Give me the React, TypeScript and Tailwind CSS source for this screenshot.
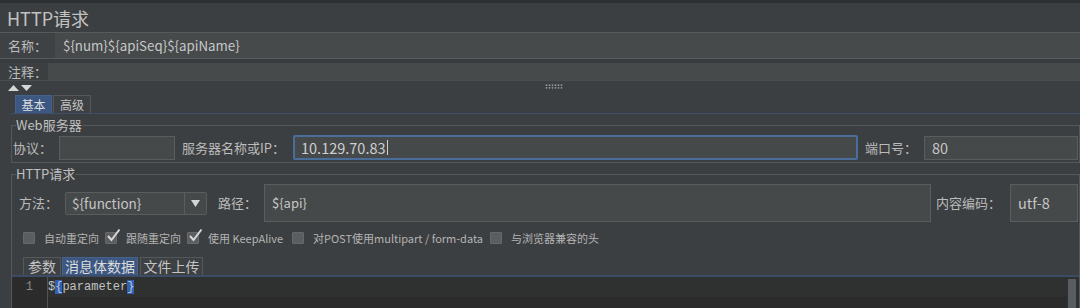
import React from "react";

const cjk = "font-['Noto_Sans_CJK_SC',sans-serif]";

function Field({ className = "", children }: { className?: string; children?: React.ReactNode }) {
  return (
    <div
      className={`flex items-center bg-[#45494a] border border-[#5a5d5f] px-[7px] text-[13px] text-[#c6c6c6] ${className}`}
    >
      {children}
    </div>
  );
}

function Check({ checked, label, className = "" }: { checked?: boolean; label: string; className?: string }) {
  return (
    <div className={`flex items-center ${className}`}>
      <span className="relative shrink-0 w-[12px] h-[12px] bg-[#5b5e60] border border-[#66696b] rounded-[1px]">
        {checked && (
          <svg className="absolute -top-[5px] left-[0px]" width="15" height="15" viewBox="0 0 15 15">
            <path d="M2 8 L5.5 12 L13.5 1.5" fill="none" stroke="#d8d8d8" strokeWidth="2" />
          </svg>
        )}
      </span>
      <span className="ml-[9px] text-[11px] text-[#b4b4b4] whitespace-nowrap">{label}</span>
    </div>
  );
}

function Tab({ label, active, className = "" }: { label: string; active?: boolean; className?: string }) {
  return (
    <div
      className={`flex items-center justify-center h-full border border-b-0 ${
        active ? "bg-[#3b5782] border-[#45618c] text-[#dcdcdc]" : "bg-[#3e4143] border-[#55585a] text-[#c4c4c4]"
      } ${className}`}
    >
      {label}
    </div>
  );
}

export default function App() {
  return (
    <div
      className={`w-[1080px] h-[308px] overflow-hidden bg-[#3c3f41] text-[#bbbbbb] border-t-[3px] border-[#2d2f31] ${cjk}`}
    >
      {/* title */}
      <div className="h-[29px] pl-[7px] flex items-center text-[18px] text-[#c2c2c2] leading-none">HTTP请求</div>

      {/* name */}
      <div className="flex h-[27px] border-y border-[#57595b] bg-[#3f4244]">
        <div className="w-[55px] pl-[8px] flex items-center text-[13px]">名称：</div>
        <div className="flex-1 flex items-center bg-[#464a4b] pl-[8px] text-[13.3px] text-[#c8c8c8]">
          {"${num}${apiSeq}${apiName}"}
        </div>
      </div>
      <div className="h-[4px] bg-[#393c3e]" />

      {/* comment */}
      <div className="flex h-[18px] border-b border-[#4a4d4f]">
        <div className="w-[48px] pl-[8px] flex items-center text-[13px]">注释：</div>
        <div className="flex-1 bg-[#464a4b]" />
      </div>

      {/* arrows + splitter handle */}
      <div className="relative h-[14px] flex items-center pl-[8px]">
        <svg width="26" height="8" viewBox="0 0 26 8">
          <path d="M0 7 L5.5 1 L11 7 Z" fill="#d6d6d6" />
          <path d="M13 1 L24 1 L18.5 7 Z" fill="#d6d6d6" />
        </svg>
        <svg className="absolute left-[545px] top-[3px]" width="18" height="5" viewBox="0 0 18 5">
          {[0, 1, 2, 3, 4, 5].map((i) => (
            <g key={i}>
              <circle cx={1.5 + i * 3} cy={1.2} r={0.9} fill="#9a9a9a" />
              <circle cx={1.5 + i * 3} cy={3.8} r={0.9} fill="#9a9a9a" />
            </g>
          ))}
        </svg>
      </div>

      {/* top tabs */}
      <div className="ml-[11px] h-[19px] pl-[4px] flex items-end border-b border-[#3e4f6b] text-[12px]">
        <Tab label="基本" active className="w-[37px] h-[18px]" />
        <Tab label="高级" className="w-[38px] h-[18px] ml-[1px]" />
      </div>

      {/* Web server group */}
      <fieldset className="ml-[11px] mt-[4px] border border-[#55585a] px-0 pb-[2px]">
        <legend className="ml-[4px] text-[13px] leading-[14px] text-[#c0c0c0]">Web服务器</legend>
        <div className="mt-[3px] flex h-[25px] items-center text-[13px]">
          <div className="w-[47px] pl-[1px]">协议：</div>
          <Field className="w-[116px] h-[24px]" />
          <div className="w-[118px] pl-[7px] whitespace-nowrap">服务器名称或IP：</div>
          <div className="flex-1 h-[25px] border-2 border-[#4a6d9a] rounded-[2px] bg-[#45494a] flex items-center pl-[6px] text-[14.5px] text-[#cfcfcf]">
            10.129.70.83
            <span className="ml-[1px] w-px h-[15px] bg-[#d0d0d0]" />
          </div>
          <div className="w-[66px] pl-[7px] whitespace-nowrap">端口号：</div>
          <Field className="w-[154px] h-[24px] mr-[1px] text-[14.5px]">80</Field>
        </div>
      </fieldset>

      {/* HTTP request group */}
      <fieldset className="ml-[11px] mt-[4px] border border-[#55585a] px-0">
        <legend className="ml-[4px] text-[13px] leading-[14px] text-[#c0c0c0]">HTTP请求</legend>
        <div className="mt-[3px] flex h-[38px] items-center text-[13px]">
          <div className="w-[53px] pl-[7px]">方法：</div>
          <div className="w-[142px] h-[23px] flex bg-[#45494a] border border-[#5a5d5f] rounded-[2px] text-[13.5px] text-[#c6c6c6]">
            <div className="flex-1 flex items-center pl-[6px]">{"${function}"}</div>
            <div className="w-[22px] border-l border-[#5a5d5f] flex items-center justify-center">
              <svg width="9" height="7" viewBox="0 0 9 7">
                <path d="M0 0 L9 0 L4.5 7 Z" fill="#d4d4d4" />
              </svg>
            </div>
          </div>
          <div className="w-[57px] pl-[11px]">路径：</div>
          <Field className="flex-1 h-[38px]">{"${api}"}</Field>
          <div className="w-[79px] pl-[5px] whitespace-nowrap">内容编码：</div>
          <Field className="w-[68px] h-[38px] mr-[1px] text-[14.5px]">utf-8</Field>
        </div>

        <div className="mt-[6px] h-[20px] flex items-center pl-[11px]">
          <Check label="自动重定向" className="w-[82px]" />
          <Check checked label="跟随重定向" className="w-[82px]" />
          <Check checked label="使用 KeepAlive" className="w-[105px]" />
          <Check label="对POST使用multipart / form-data" className="w-[198px]" />
          <Check label="与浏览器兼容的头" />
        </div>

        <div className="mt-[9px] h-[20px] pl-[11px] flex items-end border-b-2 border-[#3d4c66] text-[14px]">
          <Tab label="参数" className="w-[38px] h-[18px]" />
          <Tab label="消息体数据" active className="w-[76px] h-[18px] ml-[1px]" />
          <Tab label="文件上传" className="w-[63px] h-[18px] ml-[2px]" />
        </div>

        <div className="flex h-[40px] bg-[#2b2b2b]">
          <div className="w-[36px] border-r border-[#505254] text-right pr-[14px] font-['Liberation_Mono',monospace] text-[12px] leading-[20px] text-[#8a8a8a]">
            1
          </div>
          <div className="flex-1 h-[20px] bg-[#2f3030] font-['Liberation_Mono',monospace] text-[12px] leading-[20px] text-[#c3c3c3] whitespace-pre">
            $<span className="bg-[#2f61b8]">{"{"}</span>parameter<span className="bg-[#2f61b8]">{"}"}</span>
          </div>
          <div className="w-[12px] pt-[2px] pl-[1px] bg-[#2f3032]">
            <div className="w-[8px] h-[38px] bg-[#5a5d60] rounded-[1px]" />
          </div>
        </div>
      </fieldset>
    </div>
  );
}
